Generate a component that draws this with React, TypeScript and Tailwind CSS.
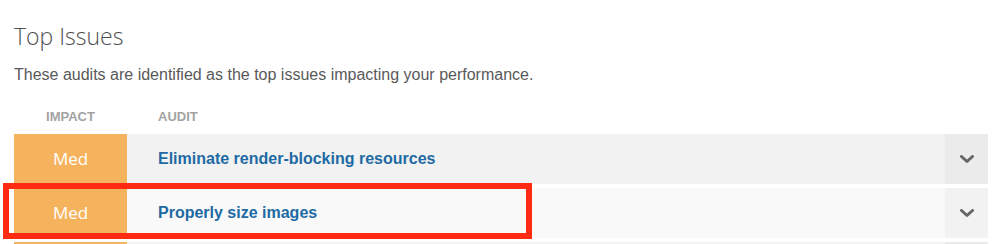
import React from 'react';

interface Issue {
  impact: string;
  audit: string;
}

const issues: Issue[] = [
  { impact: 'Med', audit: 'Eliminate render-blocking resources' },
  { impact: 'Med', audit: 'Properly size images' },
  // next row only peeks in at the bottom edge
  { impact: '', audit: '' },
];

function Chevron() {
  return (
    <svg width="14" height="9" viewBox="0 0 14 9" fill="none">
      <polyline
        points="1.5,1.5 7,6.5 12.5,1.5"
        stroke="#666666"
        strokeWidth="3"
        strokeLinecap="round"
        strokeLinejoin="round"
      />
    </svg>
  );
}

export default function App() {
  return (
    <div className="relative w-[1000px] h-[244px] overflow-hidden bg-white pl-[14px] pr-[12px] pt-[20px]">
      <h2 className="text-[23px] leading-[32px] font-light text-[#4f4f4f] font-['Open_Sans',sans-serif]">
        Top Issues
      </h2>
      <p className="mt-[13px] text-[16px] leading-[20px] text-[#595959] font-['Liberation_Sans',Arial,sans-serif]">
        These audits are identified as the top issues impacting your performance.
      </p>

      <div className="mt-[24px] flex h-[16px] text-[13px] leading-[16px] font-bold uppercase text-[#a3a3a3] font-['Liberation_Sans',Arial,sans-serif]">
        <div className="w-[113px] text-center">Impact</div>
        <div className="pl-[31px]">Audit</div>
      </div>

      <div className="mt-[9px] flex flex-col gap-[4px]">
        {issues.map((issue, i) => (
          <div
            key={i}
            className={`flex h-[50px] ${i % 2 === 0 ? 'bg-[#f2f2f2]' : 'bg-[#f9f9f9]'}`}
          >
            <div className="w-[113px] flex items-center justify-center bg-[#f6b35e] text-white text-[17px] font-['Open_Sans',sans-serif]">
              {issue.impact}
            </div>
            <div className="flex-1 flex items-center pl-[31px] text-[16px] font-bold text-[#1e6aa4] font-['Liberation_Sans',Arial,sans-serif]">
              {issue.audit}
            </div>
            <div
              className={`w-[43px] flex items-center justify-center ${i % 2 === 0 ? 'bg-[#ebebeb]' : 'bg-[#f2f2f2]'}`}
            >
              {issue.audit && <Chevron />}
            </div>
          </div>
        ))}
      </div>

      {/* annotation box around the second row */}
      <div className="absolute left-[3px] top-[183px] w-[529px] h-[56px] border-[6px] border-[#ff2a12]" />
    </div>
  );
}
